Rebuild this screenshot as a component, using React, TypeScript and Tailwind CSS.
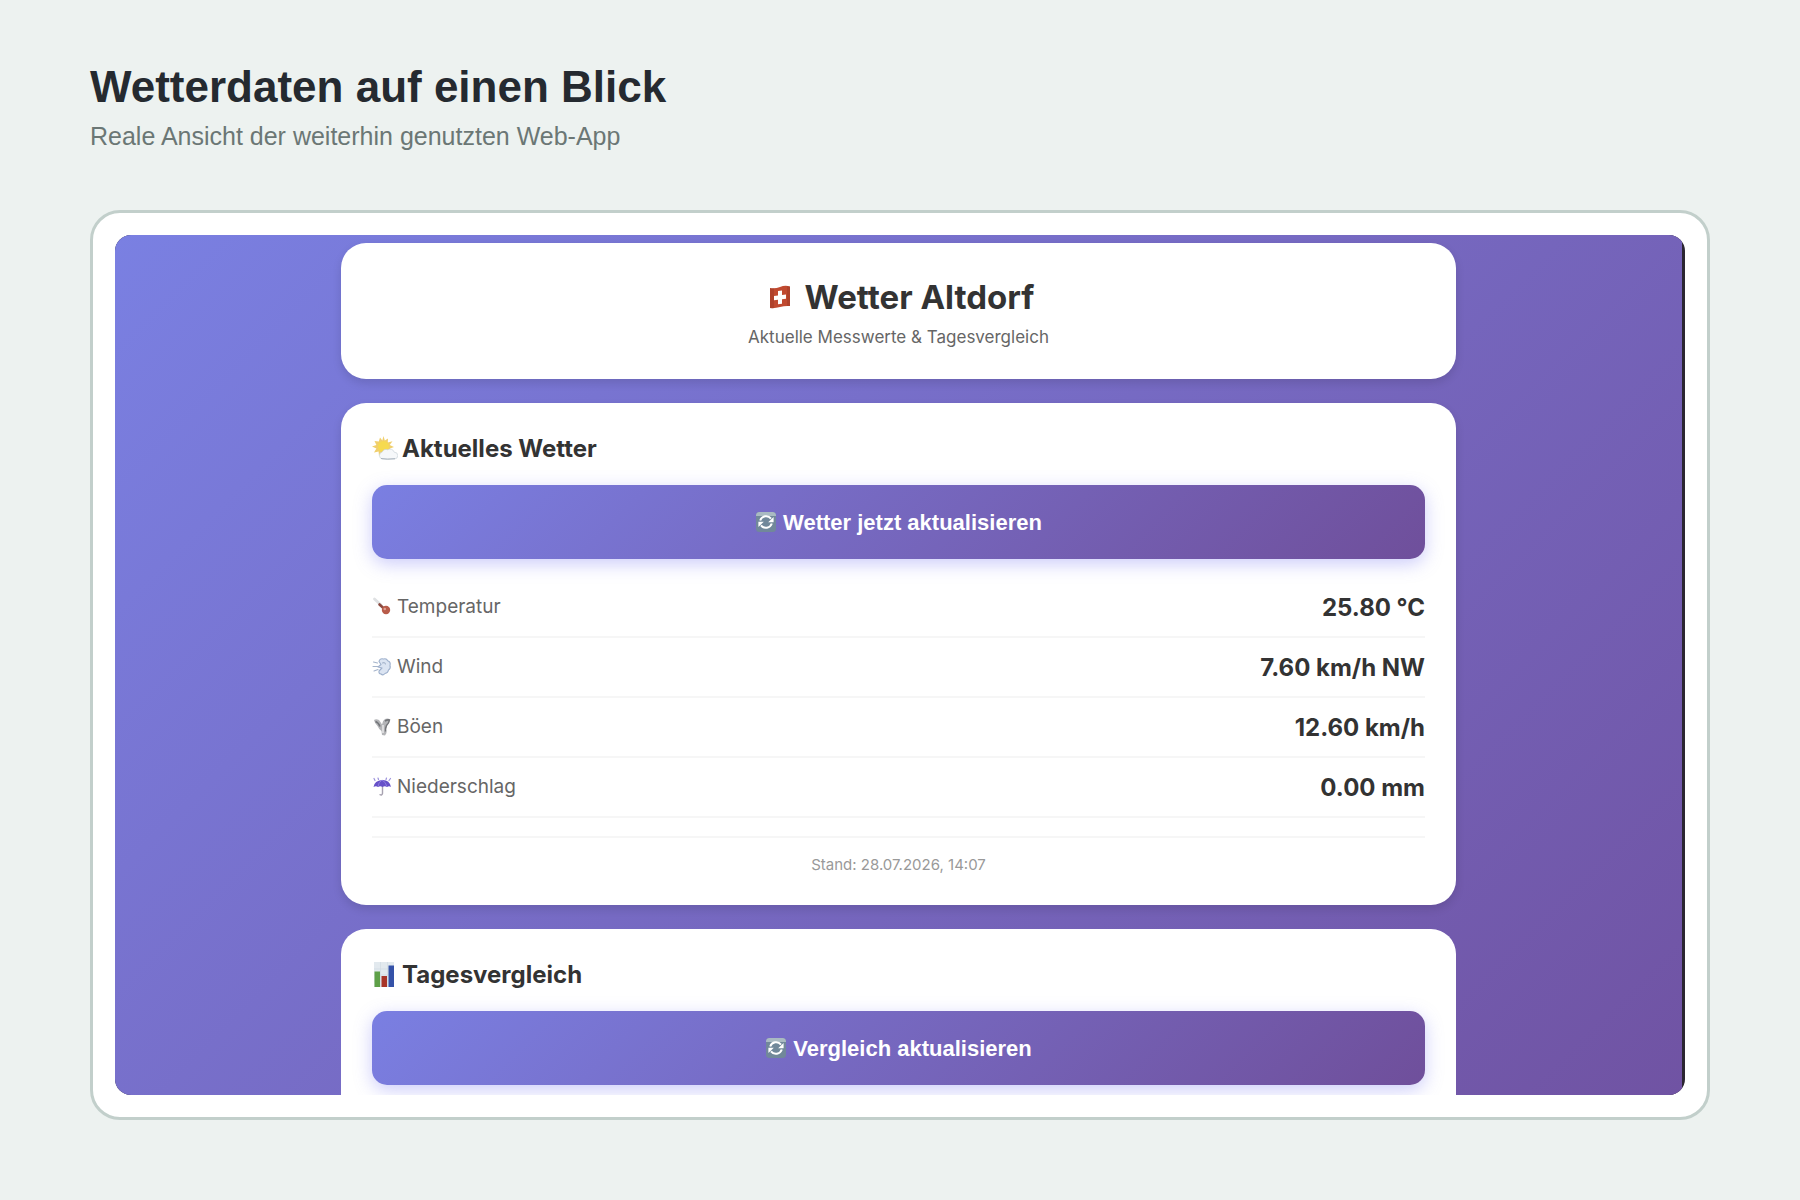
import { useState } from "react";
import type { ReactNode } from "react";

function FlagIcon() {
  return (
    <svg viewBox="0 0 34 34" className="size-[34px] shrink-0" aria-hidden="true">
      <path d="M7 8q5 1 10-1t10-.5V26q-5-.5-10 1T7 28z" fill="#c04a30" />
      <path d="M7 8q2 .4 4 .3V28q-2 .4-4 0zM24 6.4q2-.1 3 .1V26q-1-.1-3 0z" fill="#8f3422" opacity=".35" />
      <path d="M15 11l4-.5v4.500l4-.4v4.200l-4 .4v4.500l-4 .6v-4.500l-4 .5v-4.200l4-.5z" fill="#fff" />
    </svg>
  );
}

function SunCloudIcon() {
  return (
    <svg viewBox="0 0 26 26" className="size-[26px] shrink-0" aria-hidden="true">
      <path
        d="M11.500 0l1.300 4.500 3.200-2-.2 4 4.700-1.200-2.800 3.700 4.300 2-4 1.400 1 4-4-1-2 4-2.500-3L7 20l-.4-4.400-4.600.8 2.400-4L0 10.500l4.400-1.600L2.500 5l4.300.6L8 1.500l2.300 3z"
        fill="#f0cf6c"
      />
      <circle cx="11.500" cy="10.500" r="5.500" fill="#f6da50" />
      <path
        d="M10.500 23a3.500 3.500 0 0 1-.3-6.900 4 4 0 0 1 5.500-2.300 4.300 4.300 0 0 1 6.500 2.400 3.400 3.400 0 0 1 .3 6.800z"
        fill="#f6f8fa"
        stroke="#ccd4da"
        strokeWidth=".7"
      />
      <path d="M9 22.500q6 1.300 14 .2" stroke="#a9b3bd" strokeWidth="1" fill="none" />
    </svg>
  );
}

function ChartIcon() {
  return (
    <svg viewBox="0 0 26 26" className="size-[26px] shrink-0" aria-hidden="true">
      <path d="M2 0h20v25H2z" fill="#e2e9ee" />
      <path d="M2 7h20M2 13h20M2 19h20M8.500 0v25M15.500 0v25" stroke="#cfd9e0" strokeWidth=".6" />
      <path d="M2.500 9.500h5.500V25H2.500z" fill="#5ea048" />
      <path d="M9.500 14h5.500v11H9.500z" fill="#a83428" />
      <path d="M16.500 3.500H22V25h-5.500z" fill="#3552a8" />
    </svg>
  );
}

function RefreshIcon() {
  return (
    <svg viewBox="0 0 22 22" className="size-[22px] shrink-0" aria-hidden="true">
      <rect x="1" y="1" width="20" height="20" rx="3.500" fill="#71889a" />
      <path d="M4.500 1h13A3.500 3.500 0 0 1 21 4.500V5H1v-.5A3.500 3.500 0 0 1 4.500 1z" fill="#a9bac2" />
      <path d="M5.200 9.500A6.200 6.200 0 0 1 16 7.600M16.800 12.500A6.200 6.200 0 0 1 6 14.400" stroke="#fff" strokeWidth="2" fill="none" />
      <path d="M18.600 6v5.200h-5.400zM3.400 16v-5.200h5.400z" fill="#fff" />
    </svg>
  );
}

function ThermometerIcon() {
  return (
    <svg viewBox="0 0 20 20" className="size-5 shrink-0" aria-hidden="true">
      <path d="M2.500 2L9 8" stroke="#dfe1e3" strokeWidth="2.800" strokeLinecap="round" />
      <path d="M7.500 7.500L13 12.500" stroke="#8c4a40" strokeWidth="2.600" strokeLinecap="round" />
      <circle cx="14" cy="13" r="4.200" fill="#b85c4a" />
      <circle cx="12.800" cy="12" r="1.300" fill="#dfa092" />
    </svg>
  );
}

function WindIcon() {
  return (
    <svg viewBox="0 0 20 20" className="size-5 shrink-0" aria-hidden="true">
      <path
        d="M7 4.500Q8 1 11.500 2q3-1 4.200 1.800Q19 5 18 8.500q1 3-1.500 4.500-.5 3-3.500 3.500-2 2.500-4 .5-2.500-.5-2-3L10 11 6 10l3-2.500z"
        fill="#dbe4f2"
        stroke="#9eb0cc"
        strokeWidth="1.100"
        strokeLinejoin="round"
      />
      <path d="M1.500 5l4 1M1 9.500h5M2 14l4-1.500M10.500 6q2-1 3 1" stroke="#a5b4cb" strokeWidth="1.100" fill="none" strokeLinecap="round" />
    </svg>
  );
}

function TornadoIcon() {
  return (
    <svg viewBox="0 0 20 20" className="size-5 shrink-0" aria-hidden="true">
      <path d="M2 3q2-1.500 5 0 1.500 2 3 4.500Q10.500 3.500 13 2q3-1 5 .5-.500 3.500-3 6-1 3.500-.5 7.500l-1.500 2.500-3-.5-.5-4Q7 12.500 5.500 9 2.500 6 2 3z" fill="#b4b5b8" />
      <path d="M13 4q2.500-1.500 4.500-1-.500 3-3 5.500-1.500 3-1 6M3.500 4.500q3 1 4.500 5" stroke="#737579" strokeWidth="1.500" fill="none" />
      <path d="M11 8v8" stroke="#e8e9ea" strokeWidth="1.500" />
    </svg>
  );
}

function UmbrellaIcon() {
  return (
    <svg viewBox="0 0 20 20" className="size-5 shrink-0" aria-hidden="true">
      <path d="M10.500 9v7.500q-.5 2-2.500 1.200" stroke="#a7a2b0" strokeWidth="1.400" fill="none" strokeLinecap="round" />
      <path d="M1.500 10Q2.500 3.500 10 3t9 7q-2-1.500-4 0-2.200-1.500-4.500 0-2.200-1.500-4.500 0-2-1.500-4.500 0z" fill="#6650c8" />
      <path d="M6 9.500Q6.500 5 10 3q4 2 4.800 6.500" stroke="#8d7ce0" strokeWidth="1" fill="none" />
      <path d="M2 1.500l1 2M6 1l.5 1.500M14.500 1l-.5 1.500M18.500 1.500l-1.500 2" stroke="#9c92dc" strokeWidth="1.200" strokeLinecap="round" />
    </svg>
  );
}

const measurements = [
  { label: "Temperatur", value: "25.80 °C", icon: <ThermometerIcon /> },
  { label: "Wind", value: "7.60 km/h NW", icon: <WindIcon /> },
  { label: "Böen", value: "12.60 km/h", icon: <TornadoIcon /> },
  { label: "Niederschlag", value: "0.00 mm", icon: <UmbrellaIcon /> },
];

function CardTitle({ icon, children }: { icon: ReactNode; children: ReactNode }) {
  return (
    <h2 className="flex items-center gap-1 text-[24px] leading-7 font-bold text-[#333]">
      {icon}
      {children}
    </h2>
  );
}

function RefreshButton({ onClick, children }: { onClick: () => void; children: ReactNode }) {
  return (
    <button
      type="button"
      onClick={onClick}
      className="mt-[22px] flex h-[74px] w-full cursor-pointer items-center justify-center gap-1.5 rounded-[15px] bg-linear-135 from-[#7a7fe2] to-[#6f4f9b] font-['Liberation_Sans',Arial,sans-serif] text-[22px] font-bold text-white shadow-[0_5px_18px_rgba(110,110,240,0.35)]">
      <RefreshIcon />
      {children}
    </button>
  );
}

export default function App() {
  const [updatedAt, setUpdatedAt] = useState("28.07.2026, 14:07");

  const handleRefresh = () => {
    setUpdatedAt(
      new Date().toLocaleString("de-DE", {
        day: "2-digit",
        month: "2-digit",
        year: "numeric",
        hour: "2-digit",
        minute: "2-digit",
      })
    );
  };

  return (
    <main className="min-h-screen bg-[#edf2f0] px-[90px] pt-16 pb-[79px] font-['Liberation_Sans',Arial,sans-serif]">
      <header>
        <h1 className="text-[44px] leading-[46px] font-bold text-[#252a30]">
          Wetterdaten auf einen Blick
        </h1>
        <p className="mt-2.5 text-[25px] leading-8 text-[#6b7775]">
          Reale Ansicht der weiterhin genutzten Web-App
        </p>
      </header>

      <div className="mt-[58px] rounded-[30px] border-3 border-[#c2cfcb] bg-white p-[22px]">
        <div className="overflow-hidden rounded-2xl bg-[#2b2631] pr-[3px] font-[Inter,sans-serif]">
          <div className="bg-linear-135 from-[#7a80e2] to-[#7053a3] pt-2">
            <div className="mx-auto flex w-full max-w-[1115px] flex-col gap-6">
              <section className="rounded-[25px] bg-white px-[31px] pt-[33px] pb-[30px] text-center shadow-[0_4px_10px_rgba(0,0,0,0.12)]">
                <h2 className="flex items-center justify-center gap-2 text-[33px] leading-[42px] font-bold text-[#333]">
                  <FlagIcon />
                  Wetter Altdorf
                </h2>
                <p className="mt-[7px] text-[17px] leading-6 text-[#666]">
                  Aktuelle Messwerte &amp; Tagesvergleich
                </p>
              </section>

              <section className="rounded-[25px] bg-white px-[31px] pt-8 pb-[30px] shadow-[0_4px_10px_rgba(0,0,0,0.12)]">
                <CardTitle icon={<SunCloudIcon />}>Aktuelles Wetter</CardTitle>
                <RefreshButton onClick={handleRefresh}>Wetter jetzt aktualisieren</RefreshButton>
                <dl className="mt-[19px]">
                  {measurements.map(({ label, value, icon }) => (
                    <div
                      key={label}
                      className="flex h-[60px] items-center justify-between border-b-2 border-[#f6f6f6]">
                      <dt className="flex items-center gap-[5px] text-[19px] text-[#666]">
                        {icon}
                        {label}
                      </dt>
                      <dd className="pt-0.5 text-[24px] font-bold text-[#333]">{value}</dd>
                    </div>
                  ))}
                </dl>
                <p className="mt-[18px] border-t-2 border-[#f6f6f6] pt-[17px] text-center text-[15px] leading-5 text-[#999]">
                  Stand: {updatedAt}
                </p>
              </section>

              <section className="rounded-t-[25px] bg-white px-[31px] pt-8 pb-[10px]">
                <CardTitle icon={<ChartIcon />}>Tagesvergleich</CardTitle>
                <RefreshButton onClick={handleRefresh}>Vergleich aktualisieren</RefreshButton>
              </section>
            </div>
          </div>
        </div>
      </div>
    </main>
  );
}
